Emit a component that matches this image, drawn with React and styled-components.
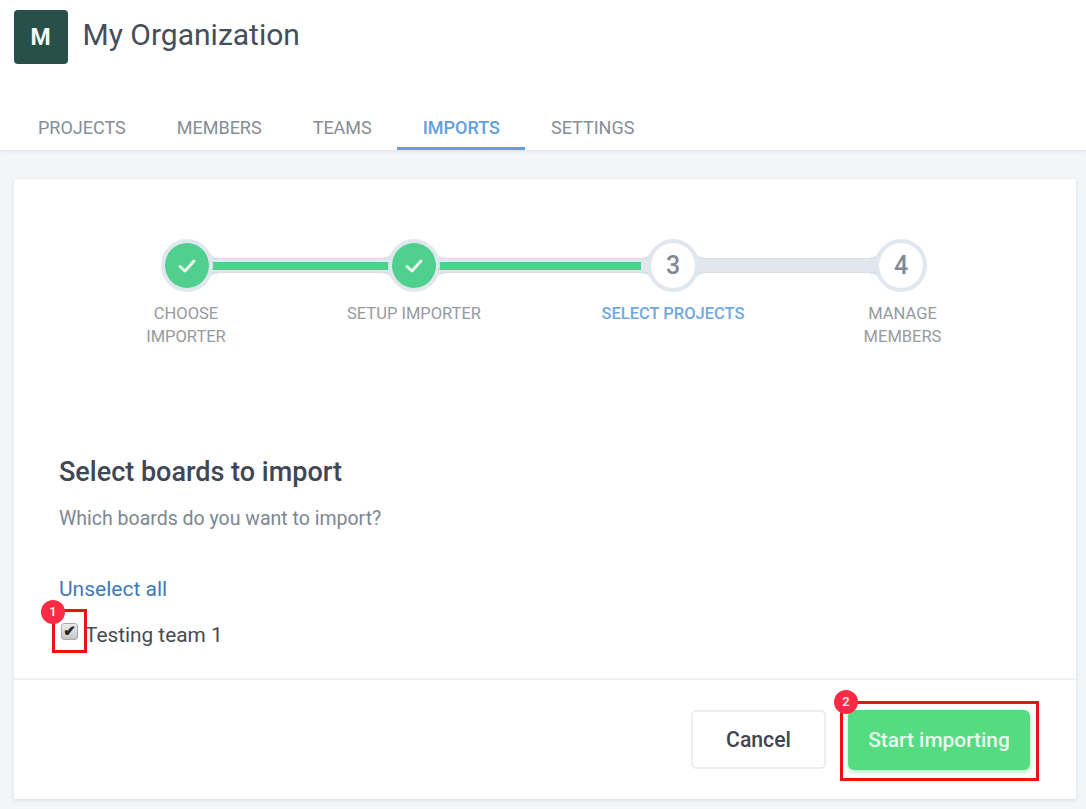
import React from 'react';
import styled, { createGlobalStyle } from 'styled-components';

const GlobalStyle = createGlobalStyle`
  html, body {
    margin: 0;
    padding: 0;
    background: #f3f6f9;
    font-family: Roboto, "Liberation Sans", sans-serif;
  }
  * { box-sizing: border-box; }
`;

const Page = styled.div`
  width: 1086px;
  height: 809px;
  overflow: hidden;
`;

const Header = styled.header`
  height: 150px;
  background: #fff;
  box-shadow: 0 1px 3px rgba(60, 80, 100, 0.14);
  display: flex;
  flex-direction: column;
  justify-content: space-between;
`;

const OrgRow = styled.div`
  display: flex;
  align-items: flex-start;
  gap: 14.5px;
  padding: 10px 0 0 14px;
`;

const OrgLogo = styled.div`
  width: 54px;
  height: 54px;
  border-radius: 4px;
  background: #28504a;
  color: #f4fbf4;
  font-size: 23px;
  font-weight: 700;
  padding-right: 1px;
  display: flex;
  align-items: center;
  justify-content: center;
`;

const OrgName = styled.h1`
  margin: 0;
  font-size: 30px;
  line-height: 50px;
  font-weight: 400;
  color: #454e5c;
`;

const Tabs = styled.nav`
  display: flex;
  padding-left: 12.5px;
`;

const Tab = styled.a`
  padding: 0 25.5px;
  height: 45px;
  line-height: 45px;
  font-size: 18px;
  font-weight: ${(p) => (p.$active ? 500 : 400)};
  color: ${(p) => (p.$active ? '#5f9fe0' : '#858d97')};
  border-bottom: 3px solid ${(p) => (p.$active ? '#5f9fe0' : 'transparent')};
`;

const Card = styled.main`
  width: 1062px;
  height: 620px;
  margin: 29px 0 0 14px;
  background: #fff;
  box-shadow: 0 1px 4px rgba(60, 80, 100, 0.16);
  display: flex;
  flex-direction: column;
`;

const Stepper = styled.div`
  height: 232px;
  padding: 60px 0 0 147px;
`;

const Track = styled.div`
  display: flex;
  align-items: center;
  height: 53px;
`;

const Circle = styled.div`
  position: relative;
  z-index: 1;
  flex: none;
  width: 52px;
  height: 53px;
  border-radius: 50%;
  border: 4px solid #e1e7ee;
  background: ${(p) => (p.$done ? '#4fd08c' : '#fff')};
  color: #7f8994;
  font-size: 25px;
  font-weight: 500;
  display: flex;
  align-items: center;
  justify-content: center;
`;

const halo = '#e1e7ee';

const Connector = styled.div`
  position: relative;
  width: ${(p) => p.$width}px;
  height: 15px;
  margin: 0 -3px;
  background: ${halo};
  box-shadow: inset 0 1px 0 #d6dde5, inset 0 -1px 0 #d6dde5;
  &::before {
    content: '';
    position: absolute;
    left: 0;
    top: 4px;
    height: 8px;
    width: ${(p) => p.$fill || 0}px;
    background: #4fd08c;
  }
  /* the little flares where the bar meets a circle */
  &::after {
    content: '';
    position: absolute;
    left: 0;
    right: 0;
    top: -5px;
    bottom: -5px;
    background:
      radial-gradient(ellipse 12px 5px at 100% 0, transparent 96%, ${halo} 100%) 0 0 / 12px 5px no-repeat,
      radial-gradient(ellipse 12px 5px at 0 0, transparent 96%, ${halo} 100%) 100% 0 / 12px 5px no-repeat,
      radial-gradient(ellipse 12px 5px at 100% 100%, transparent 96%, ${halo} 100%) 0 100% / 12px 5px no-repeat,
      radial-gradient(ellipse 12px 5px at 0 100%, transparent 96%, ${halo} 100%) 100% 100% / 12px 5px no-repeat;
  }
`;

const Labels = styled.div`
  display: grid;
  grid-template-columns: 228px 259px 229.5px 120px;
  margin: 10px 0 0 -35px;
`;

const Label = styled.div`
  width: 120px;
  justify-self: start;
  text-align: center;
  font-size: 16.5px;
  line-height: 23px;
  font-weight: ${(p) => (p.$active ? 500 : 400)};
  color: ${(p) => (p.$active ? '#71a9e0' : '#959a9f')};
`;

const WideLabel = styled(Label)`
  width: 160px;
  margin-left: -20px;
`;

const Section = styled.section`
  flex: 1;
  padding: 44px 45px 0;
  border-bottom: 2px solid #eef0f3;
`;

const Title = styled.h2`
  margin: 0;
  font-size: 27px;
  line-height: 34px;
  font-weight: 500;
  color: #3f4753;
`;

const Subtitle = styled.p`
  margin: 17px 0 0;
  font-size: 19.5px;
  line-height: 26px;
  color: #7d8792;
`;

const SelectLink = styled.a`
  display: block;
  margin-top: 43px;
  font-size: 21px;
  line-height: 28px;
  color: #3f7ab8;
`;

const Row = styled.label`
  position: relative;
  display: flex;
  align-items: center;
  height: 44px;
  margin: 6px 0 0 3px;
`;

const CheckMarker = styled.div`
  position: relative;
  flex: none;
  width: 35px;
  height: 44px;
  margin-left: -10px;
  margin-right: -11px;
  border: 3px solid #ee1111;
`;

const Check = styled.input`
  appearance: none;
  position: absolute;
  left: 6px;
  top: 11px;
  width: 17px;
  height: 17px;
  margin: 0;
  border-radius: 3px;
  border: 1px solid #a9a9a9;
  background: linear-gradient(#ededed, #c4c4c4);
  &::after {
    content: '✔';
    display: block;
    font: 15px/15px "DejaVu Sans", sans-serif;
    -webkit-text-stroke: 0.5px #222;
    text-align: center;
    color: #222;
  }
`;

const RowText = styled.span`
  font-size: 20.8px;
  color: #454b54;
  padding: 8px 0 0 9px;
`;

const Badge = styled.span`
  position: absolute;
  left: ${(p) => p.$left}px;
  top: ${(p) => p.$top}px;
  width: 24px;
  height: 24px;
  border-radius: 50%;
  background: #fb2a45;
  color: #fff;
  font-size: 13px;
  font-weight: 500;
  line-height: 24px;
  text-align: center;
`;

const Footer = styled.footer`
  height: 119px;
  display: flex;
  align-items: flex-start;
  padding: 21px 37px 0 0;
  justify-content: flex-end;
`;

const CancelButton = styled.button`
  width: 135px;
  height: 59px;
  margin: 9px 14px 0 0;
  border: 2px solid #eceef1;
  border-radius: 5px;
  background: #fff;
  color: #3f4650;
  font: 500 21.2px Roboto, sans-serif;
`;

const StartMarker = styled.div`
  position: relative;
  width: 199px;
  height: 80px;
  border: 3px solid #ee1111;
  padding: 6px 0 0 5px;
`;

const StartButton = styled.button`
  width: 182px;
  height: 60px;
  border: 0;
  border-radius: 6px;
  background: #55dc82;
  color: #e9fbef;
  box-shadow: 0 2px 5px rgba(85, 220, 130, 0.5);
  font: 500 20.9px Roboto, sans-serif;
`;

const CheckIcon = () => (
  <svg width="20" height="16" viewBox="0 0 20 16" fill="none">
    <path d="M3 8.5 L8 13 L17 3" stroke="#e8f8ef" strokeWidth="3" strokeLinecap="round" strokeLinejoin="round" />
  </svg>
);

export default function App() {
  return (
    <Page>
      <GlobalStyle />
      <Header>
        <OrgRow>
          <OrgLogo>M</OrgLogo>
          <OrgName>My Organization</OrgName>
        </OrgRow>
        <Tabs>
          <Tab>PROJECTS</Tab>
          <Tab>MEMBERS</Tab>
          <Tab>TEAMS</Tab>
          <Tab $active>IMPORTS</Tab>
          <Tab>SETTINGS</Tab>
        </Tabs>
      </Header>
      <Card>
        <Stepper>
          <Track>
            <Circle $done><CheckIcon /></Circle>
            <Connector $width={181} $fill={181} />
            <Circle $done><CheckIcon /></Circle>
            <Connector $width={213} $fill={204} />
            <Circle>3</Circle>
            <Connector $width={182} />
            <Circle>4</Circle>
          </Track>
          <Labels>
            <Label>CHOOSE IMPORTER</Label>
            <WideLabel>SETUP IMPORTER</WideLabel>
            <WideLabel $active>SELECT PROJECTS</WideLabel>
            <Label>MANAGE MEMBERS</Label>
          </Labels>
        </Stepper>
        <Section>
          <Title>Select boards to import</Title>
          <Subtitle>Which boards do you want to import?</Subtitle>
          <SelectLink>Unselect all</SelectLink>
          <Row>
            <CheckMarker>
              <Check type="checkbox" defaultChecked />
              <Badge $left={-14} $top={-12}>1</Badge>
            </CheckMarker>
            <RowText>Testing team 1</RowText>
          </Row>
        </Section>
        <Footer>
          <CancelButton>Cancel</CancelButton>
          <StartMarker>
            <StartButton>Start importing</StartButton>
            <Badge $left={-9} $top={-14}>2</Badge>
          </StartMarker>
        </Footer>
      </Card>
    </Page>
  );
}
